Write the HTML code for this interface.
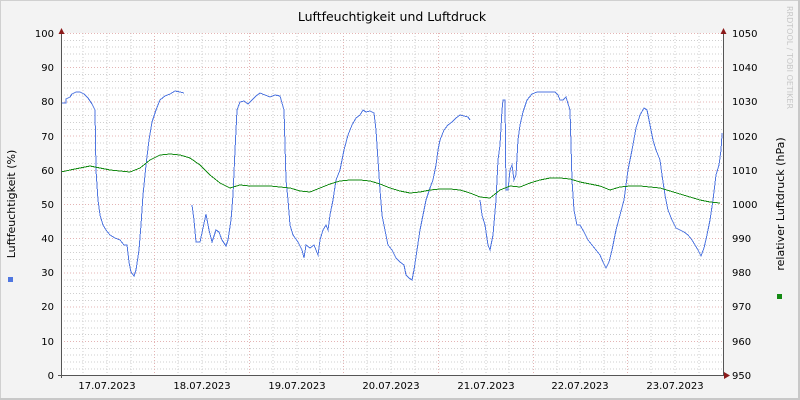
<!DOCTYPE html>
<html><head><meta charset="utf-8"><style>
html,body{margin:0;padding:0;background:#f3f3f3}
svg{display:block;font-family:"DejaVu Sans","Liberation Sans",sans-serif}
</style></head><body>
<svg width="800" height="400" xmlns="http://www.w3.org/2000/svg">
<rect x="0" y="0" width="800" height="400" fill="#f3f3f3"/>
<rect x="0.5" y="0.5" width="798" height="398" fill="none" stroke="#d0d0d0" stroke-width="1"/>
<rect x="798" y="0" width="2" height="400" fill="#c8c8c8"/>
<rect x="0" y="398" width="800" height="2" fill="#c8c8c8"/>
<rect x="61" y="33" width="662" height="342" fill="#ffffff"/>
<g id="grid" stroke-width="1" fill="none" shape-rendering="crispEdges">
<g stroke="#cfcfcf" stroke-dasharray="1,2">
<path d="M61,40.3H723M61,47.1H723M61,54H723M61,60.8H723M61,74.5H723M61,81.4H723M61,88.2H723M61,95.1H723M61,108.8H723M61,115.6H723M61,122.4H723M61,129.3H723M61,143H723M61,149.8H723M61,156.7H723M61,163.5H723M61,177.2H723M61,184.1H723M61,190.9H723M61,197.7H723M61,211.4H723M61,218.3H723M61,225.1H723M61,232H723M61,245.7H723M61,252.5H723M61,259.3H723M61,266.2H723M61,279.9H723M61,286.7H723M61,293.6H723M61,300.4H723M61,314.1H723M61,321H723M61,327.8H723M61,334.6H723M61,348.3H723M61,355.2H723M61,362H723M61,368.9H723"/>
<path d="M83,33V375M107,33V375M131,33V375M178,33V375M202,33V375M226,33V375M273,33V375M297,33V375M320,33V375M367,33V375M391,33V375M415,33V375M462,33V375M486,33V375M509,33V375M557,33V375M580,33V375M604,33V375M651,33V375M675,33V375M699,33V375"/>
</g>
<g stroke="#e4b4b4" stroke-dasharray="1,2">
<path d="M61,33.5H723M61,67.7H723M61,101.9H723M61,136.1H723M61,170.3H723M61,204.5H723M61,238.7H723M61,272.9H723M61,307.1H723M61,341.3H723"/>
<path d="M154.5,33V375M249.5,33V375M343.5,33V375M438.5,33V375M533.5,33V375M627.5,33V375"/>
</g>
</g>
<g shape-rendering="crispEdges">
<polyline fill="none" stroke="#4f76e0" stroke-width="1" points="61,103 66,103 66,99 70,97 72,94 76,92 80,92 84,94 88,98 92,104 95,110 96,170 98,200 100,215 103,225 106,230 110,235 115,238 120,240 124,245 127,245 129,262 131,272 134,276 136,270 139,250 141,225 143,195 146,165 149,140 152,122 156,110 160,100 165,96 170,94 175,91 180,92 184,93"/>
<polyline fill="none" stroke="#4f76e0" stroke-width="1" points="192,205 194,220 196,242 200,242 203,228 206,214 209,230 212,242 216,230 219,232 222,240 226,246 228,240 231,220 233,195 235,150 237,110 240,102 244,101 248,104 252,100 256,96 260,93 265,95 270,97 275,95 280,96 284,110 286,180 288,200 290,225 293,235 298,242 302,250 304,258 306,245 310,248 314,245 318,255 320,240 323,230 326,225 328,230 330,215 333,200 336,180 340,170 344,150 348,135 352,125 356,118 360,115 363,110 366,112 370,111 374,113 376,130 378,160 380,190 382,215 385,230 388,245 392,250 396,258 400,262 404,265 406,275 409,278 412,280 414,270 417,250 420,230 423,215 426,200 430,188 433,180 436,165 438,150 440,140 444,130 448,125 452,122 456,118 460,115 464,116 468,117 470,120"/>
<polyline fill="none" stroke="#4f76e0" stroke-width="1" points="480,200 482,215 485,225 488,245 490,250 493,235 496,200 498,160 500,145 502,110 503,100 505,100 506,190 508,190 510,170 512,165 514,180 516,175 518,140 520,125 523,112 527,100 532,94 537,92 545,92 555,92 558,95 560,100 563,100 566,97 570,110 572,180 574,210 577,225 580,225 584,232 588,240 592,245 596,250 600,255 603,262 606,268 609,262 612,250 616,230 620,215 624,200 628,170 632,150 636,128 640,115 644,108 647,110 650,125 653,140 656,150 660,160 662,175 665,195 668,210 672,220 676,228 680,230 684,232 688,235 692,240 695,245 698,250 701,256 704,248 707,235 710,220 713,200 716,175 719,165 721,150 722,135 722,133"/>
<polyline fill="none" stroke="#138a13" stroke-width="1" points="61,172 70,170 80,168 90,166 100,168 110,170 120,171 130,172 140,168 150,160 160,155 170,154 180,155 190,158 200,165 210,175 220,183 230,188 240,185 250,186 260,186 270,186 280,187 290,188 300,191 310,192 320,188 330,184 340,181 350,180 360,180 370,181 380,184 390,188 400,191 410,193 420,192 430,190 440,189 450,189 460,190 470,193 480,197 490,198 500,190 510,186 520,187 530,183 540,180 550,178 560,178 570,179 580,182 590,184 600,186 610,190 620,187 630,186 640,186 650,187 660,188 670,191 680,194 690,197 700,200 710,202 720,203"/>
</g>
<path d="M61.5,30V378M723.5,30V376M58,375.5H726" stroke="#555" stroke-width="1" shape-rendering="crispEdges"/>
<path d="M58.5,34L61.5,28L64.5,34Z M720.5,34L723.5,28L726.5,34Z M724,372L730,375.5L724,379Z" fill="#8b1a1a"/>
<g font-size="10" fill="#000" text-anchor="end">
<text x="54" y="37">100</text><text x="54" y="71">90</text><text x="54" y="105">80</text><text x="54" y="140">70</text><text x="54" y="174">60</text><text x="54" y="208">50</text><text x="54" y="242">40</text><text x="54" y="276">30</text><text x="54" y="310">20</text><text x="54" y="345">10</text><text x="54" y="379">0</text>
</g>
<g font-size="10" fill="#000" text-anchor="start">
<text x="732" y="37">1050</text><text x="732" y="71">1040</text><text x="732" y="105">1030</text><text x="732" y="140">1020</text><text x="732" y="174">1010</text><text x="732" y="208">1000</text><text x="732" y="242">990</text><text x="732" y="276">980</text><text x="732" y="310">970</text><text x="732" y="345">960</text><text x="732" y="379">950</text>
</g>
<g font-size="10" fill="#000" text-anchor="middle">
<text x="107" y="389">17.07.2023</text><text x="202" y="389">18.07.2023</text><text x="297" y="389">19.07.2023</text><text x="391" y="389">20.07.2023</text><text x="486" y="389">21.07.2023</text><text x="580" y="389">22.07.2023</text><text x="675" y="389">23.07.2023</text>
</g>
<text x="392" y="21" font-size="12.5" text-anchor="middle" fill="#000">Luftfeuchtigkeit und Luftdruck</text>
<text transform="translate(15,204) rotate(-90)" font-size="11" text-anchor="middle" fill="#000">Luftfeuchtigkeit (%)</text>
<text transform="translate(784,204) rotate(-90)" font-size="11" text-anchor="middle" fill="#000">relativer Luftdruck (hPa)</text>
<text transform="translate(787,6) rotate(90)" font-size="8" fill="#c8c8c8">RRDTOOL / TOBI OETIKER</text>
<rect x="8" y="277" width="5" height="5" fill="#4f76e0"/>
<rect x="777" y="294" width="5" height="5" fill="#138a13"/>
</svg>
</body></html>
